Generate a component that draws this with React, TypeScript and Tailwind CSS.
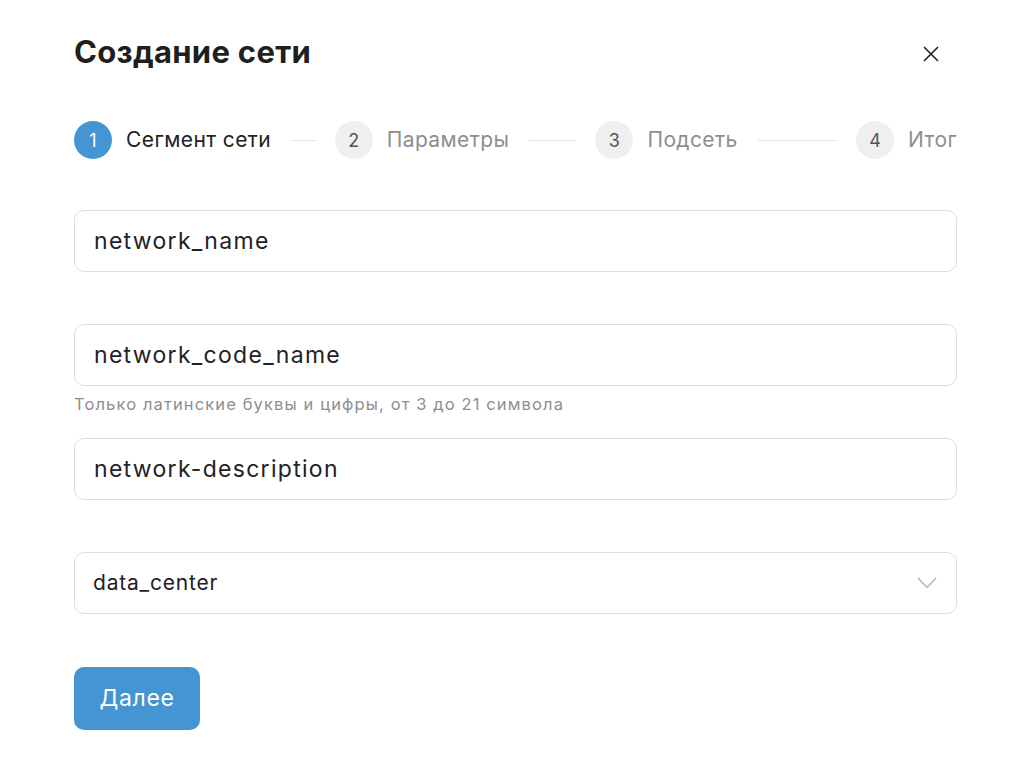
import React from "react";

const steps = [
  { n: 1, label: "Сегмент сети" },
  { n: 2, label: "Параметры" },
  { n: 3, label: "Подсеть" },
  { n: 4, label: "Итог" },
];

function Stepper({ active }: { active: number }) {
  return (
    <div className="flex items-center mt-[49px]">
      {steps.map((s, i) => {
        const isActive = s.n === active;
        const isLast = i === steps.length - 1;
        return (
          <div key={s.n} className={isLast ? "flex items-center" : "flex items-center flex-1"}>
            <span
              className={`w-[38px] h-[38px] rounded-full flex items-center justify-center text-[18px] shrink-0 ${
                isActive ? "bg-[#4595d2] text-white" : "bg-[#efefef] text-[#555]"
              }`}
            >
              {s.n}
            </span>
            <span
              className={`ml-[14px] text-[21px] tracking-[0.4px] whitespace-nowrap ${
                isActive ? "text-[#222]" : "text-[#8e8e8e]"
              }`}
            >
              {s.label}
            </span>
            {!isLast && <span className="flex-1 h-px bg-[#e3e3e3] ml-[20px] mr-[19px]" />}
          </div>
        );
      })}
    </div>
  );
}

function Field({ value, hint }: { value: string; hint?: string }) {
  return (
    <div className="h-[114px]">
      <div className="h-[62px] rounded-[10px] border border-[#dcdcdc] flex items-center px-[19px] text-[23px] tracking-[1.3px] text-[#222]">
        {value}
      </div>
      {hint && <p className="mt-[6px] text-[16.5px] tracking-[1.12px] text-[#8e8e8e]">{hint}</p>}
    </div>
  );
}

export default function App() {
  return (
    <div className="min-h-screen bg-white" style={{ fontFamily: "Inter, 'Noto Sans', sans-serif" }}>
      <div className="w-[883px] ml-[74px] pt-[32px]">
        <div className="flex items-center justify-between">
          <h1 className="text-[31px] font-bold text-[#1f1f1f] leading-[40px] tracking-[0.3px]">Создание сети</h1>
          <button className="mr-[17px] text-[#222] mt-[4px]">
            <svg width="18" height="18" viewBox="0 0 18 18" fill="none" stroke="currentColor" strokeWidth="1.6">
              <path d="M2 2L16 16M16 2L2 16" />
            </svg>
          </button>
        </div>

        <Stepper active={1} />

        <div className="mt-[51px]">
          <Field value="network_name" />
          <Field value="network_code_name" hint="Только латинские буквы и цифры, от 3 до 21 символа" />
          <Field value="network-description" />
          <div className="h-[115px]">
            <div className="h-[62px] rounded-[10px] border border-[#dcdcdc] flex items-center justify-between pl-[18px] pr-[19px] text-[21px] tracking-[0.8px] text-[#222]">
              <span>data_center</span>
              <svg width="20" height="12" viewBox="0 0 20 12" fill="none" stroke="#b5b5b5" strokeWidth="1.5">
                <path d="M1 1L10 10.5L19 1" />
              </svg>
            </div>
          </div>
          <button className="w-[126px] h-[63px] rounded-[10px] bg-[#4595d2] text-white text-[23px] tracking-[0.6px]">
            Далее
          </button>
        </div>
      </div>
    </div>
  );
}
